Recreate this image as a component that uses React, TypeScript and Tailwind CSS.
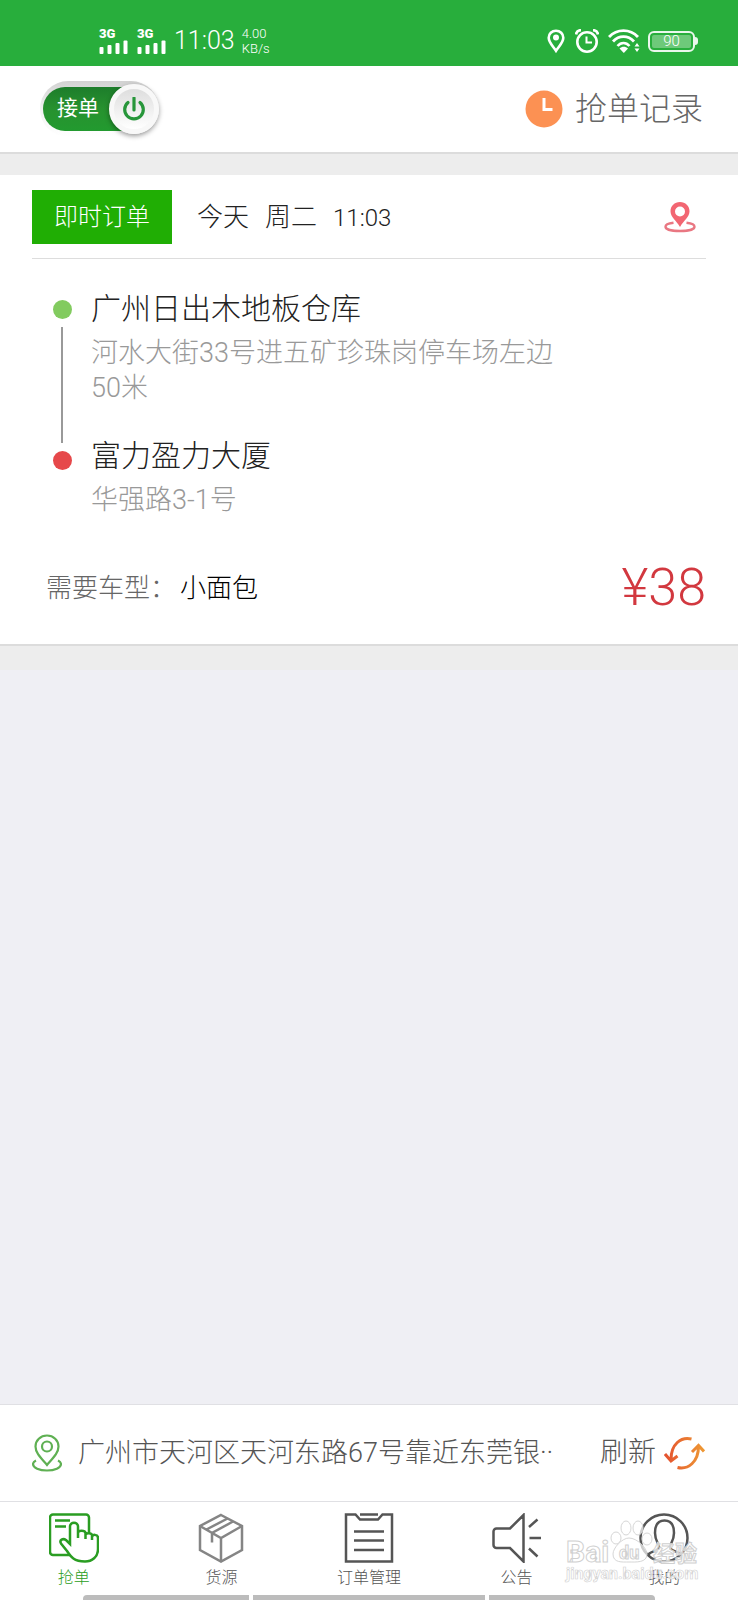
import { useState } from 'react';
import type { ReactNode } from 'react';

type Stop = {
    title: string;
    address: string;
};

type NavItem = {
    label: string;
    icon: ReactNode;
    active?: boolean;
};

const pickup: Stop = { title: '广州日出木地板仓库', address: '河水大街33号进五矿珍珠岗停车场左边50米' };
const dropoff: Stop = { title: '富力盈力大厦', address: '华强路3-1号' };

const Signal = () => (
    <div className="flex w-[29px] flex-col gap-px">
        <span className="text-[13px] leading-[10px] font-black">3G</span>
        <svg viewBox="0 0 29 14" className="h-[14px] w-[29px]" fill="currentColor" aria-hidden="true">
            <rect x="0.5" y="7" width="4" height="7" rx="1" />
            <rect x="8.5" y="5" width="4" height="9" rx="1" />
            <rect x="16.5" y="3" width="4" height="11" rx="1" />
            <rect x="24.5" y="0.5" width="4" height="13.5" rx="1" />
        </svg>
    </div>
);

const StatusBar = () => (
    <div className="flex items-start justify-between bg-[#28ae3c] pt-[26px] pr-[40px] pb-[10px] pl-[99px] text-white">
        <div className="flex h-[30px] items-center">
            <Signal />
            <div className="ml-[9px]">
                <Signal />
            </div>
            <span className="ml-[8px] text-[25px] leading-[30px] font-light">11:03</span>
            <span className="ml-[7px] flex flex-col text-[13px] leading-[15px] font-light">
                <span>4.00</span>
                <span>KB/s</span>
            </span>
        </div>
        <div className="flex h-[30px] items-center">
            <svg viewBox="0 0 18 24" className="mr-[10px] h-[24px] w-[18px]" fill="none" aria-hidden="true">
                <path
                    d="M9 1.7c-4.2 0-7.3 3-7.3 7.1 0 4.8 4.3 8.2 7.3 13 3-4.8 7.3-8.2 7.3-13 0-4.1-3.1-7.1-7.3-7.1z"
                    stroke="currentColor"
                    strokeWidth="2.6"
                />
                <circle cx="9" cy="8.5" r="3" fill="currentColor" />
            </svg>
            <svg viewBox="0 0 24 24" className="mr-[9px] h-[24px] w-[24px]" fill="none" stroke="currentColor" aria-hidden="true">
                <circle cx="12" cy="13" r="9.7" strokeWidth="2.6" />
                <path d="M11.5 7.500v6h5.500" strokeWidth="2" />
                <path d="M1 5.500C1.500 3 3.500 1.300 6 1.200M23 5.500C22.500 3 20.500 1.300 18 1.200" strokeWidth="2.800" />
            </svg>
            <svg viewBox="0 0 32 24" className="mr-[8px] h-[24px] w-[32px]" fill="none" stroke="currentColor" aria-hidden="true">
                <path d="M1 8C9-.5 22-.5 30 8" strokeWidth="2.8" />
                <path d="M5 12.500c6-6.500 15-6.500 21 0" strokeWidth="2.8" />
                <path d="M9.500 17c3.500-4 8.500-4 12 0" strokeWidth="2.6" />
                <path d="M11.500 19.500c2.500-2.500 6-2.500 8.500 0L15.800 24z" fill="currentColor" stroke="none" />
                <path d="M26.500 17.500h5L29 14zM26.500 19.500h5L29 23z" fill="currentColor" stroke="none" />
            </svg>
            <div className="flex items-center">
                <div className="h-[21px] w-[47px] rounded-[6px] border-2 border-white/90 p-[2px]">
                    <div className="h-full rounded-[2px] bg-[#6ec97a] text-center text-[15px] leading-[13px] font-light">90</div>
                </div>
                <div className="h-[8px] w-[3px] rounded-r-sm bg-white/90" />
            </div>
        </div>
    </div>
);

const OrderSwitch = () => {
    const [online, setOnline] = useState(true);

    return (
        <button
            type="button"
            role="switch"
            aria-checked={online}
            onClick={() => setOnline(!online)}
            className="flex h-[56px] w-[119px] items-center rounded-full bg-gradient-to-b from-[#d2d2d2] via-[#f2f2f2] to-white pl-[3px]"
        >
            <span className="flex h-[44px] flex-1 items-center rounded-l-full bg-gradient-to-b from-[#1d7d2b] via-[#27922f] to-[#229a2f] pl-[14px] text-[21px] text-white">
                接单
            </span>
            <span className="-ml-[14px] flex size-[50px] shrink-0 items-center justify-center rounded-full border-[5px] border-[#f8f8f8] bg-gradient-to-b from-[#dedede] to-white shadow-[0_2px_5px_rgba(0,0,0,0.4)]">
                <svg viewBox="0 0 24 24" className="size-[24px]" fill="none" stroke="#27963a" strokeWidth="3.2" aria-hidden="true">
                    <path d="M12 1v12" strokeLinecap="round" />
                    <path d="M6 5.500a9.300 9.300 0 1 0 12 0" strokeLinecap="round" />
                </svg>
            </span>
        </button>
    );
};

const Header = () => (
    <header className="flex items-center justify-between border-b-2 border-[#dcdcdc] bg-white pt-[15px] pr-[35px] pb-[15px] pl-[40px]">
        <OrderSwitch />
        <a href="#records" className="flex items-center gap-[12px] text-[32px] leading-[40px] font-light text-[#666]">
            <svg viewBox="0 0 38 38" className="size-[38px]" aria-hidden="true">
                <circle cx="19" cy="19" r="18.5" fill="#fc9153" />
                <path d="M19 8v11.500h8.500" fill="none" stroke="#fff" strokeWidth="3" />
            </svg>
            抢单记录
        </a>
    </header>
);

const StopText = ({ title, address }: Stop) => (
    <div className="flex flex-col gap-[5px]">
        <h2 className="text-[30px] leading-[44px] font-light text-[#222]">{title}</h2>
        <p className="w-[470px] max-w-full text-[27px] leading-[35px] font-light text-[#999]">{address}</p>
    </div>
);

const OrderCard = () => (
    <section className="border-b-2 border-[#dcdcdc] bg-white px-[32px] pt-[15px]">
        <div className="flex items-center border-b border-[#ddd] pb-[14px]">
            <span className="w-[140px] bg-[#20ae04] text-center text-[24px] leading-[54px] font-light text-white">即时订单</span>
            <p className="ml-[25px] flex items-baseline gap-[16px] text-[26px] font-light text-[#222]">
                <span>今天</span>
                <span>周二</span>
                <span className="text-[24px]">11:03</span>
            </p>
            <svg viewBox="0 0 32 32" className="mr-[10px] ml-auto size-[32px]" fill="none" role="img" aria-label="地图">
                <path
                    fillRule="evenodd"
                    d="M16 1C10.500 1 6.500 5 6.500 10.200 6.500 16 12 19 16 26c4-7 9.500-10 9.500-15.800C25.500 5 21.500 1 16 1zm0 4.500a5 5 0 1 1 0 10 5 5 0 0 1 0-10z"
                    fill="#f26672"
                />
                <path
                    d="M9.500 21.800C4 22.500 1.500 24 1.500 25.700c0 2.600 6.500 4.300 14.500 4.300s14.500-1.700 14.500-4.300c0-1.700-2.500-3.200-8-3.900"
                    stroke="#e97782"
                    strokeWidth="2.4"
                />
            </svg>
        </div>
        <div className="flex gap-[19px] pt-[28px] pl-[20px]">
            <div className="flex w-[20px] flex-col items-center gap-[8px] pt-[13px] pb-[48px]">
                <span className="size-[19px] rounded-full bg-[#82cb5f]" />
                <span className="w-[2px] flex-1 bg-[#999]" />
                <span className="size-[19px] rounded-full bg-[#e6484a]" />
            </div>
            <div className="flex flex-1 flex-col gap-[28px]">
                <StopText {...pickup} />
                <StopText {...dropoff} />
            </div>
        </div>
        <div className="flex items-center justify-between pt-[40px] pb-[26px] pl-[14px] font-light">
            <p className="flex gap-[4px] text-[26px] text-[#666]">
                需要车型：<span className="text-black">小面包</span>
            </p>
            <span className="text-[52px] leading-[60px] text-[#d2383f]">¥38</span>
        </div>
    </section>
);

const LocationBar = () => (
    <div className="flex items-center border-y border-[#e0e0e4] bg-white py-[27px] pr-[33px] pl-[32px] font-light text-[#555]">
        <svg viewBox="0 0 30 38" className="h-[38px] w-[30px] shrink-0" fill="none" stroke="#5fb053" strokeWidth="2.2" aria-hidden="true">
            <path d="M15 1.500C8.500 1.500 3.500 6.300 3.500 12.500 3.500 19 9 24 15 31c6-7 11.500-12 11.500-18.500C26.500 6.300 21.500 1.500 15 1.500z" />
            <circle cx="15" cy="12.5" r="5" />
            <path d="M4 26.500C2 27.500 1 28.700 1 30c0 3.800 6.300 6.500 14 6.500S29 33.800 29 30c0-1.300-1-2.500-3-3.500" />
        </svg>
        <p className="ml-[16px] flex-1 text-[27px] leading-[42px] whitespace-nowrap">广州市天河区天河东路67号靠近东莞银··</p>
        <button type="button" className="flex items-center gap-[8px] text-[28px] leading-[42px]">
            刷新
            <svg viewBox="0 0 41 34" className="h-[34px] w-[41px]" fill="none" strokeWidth="3" aria-hidden="true">
                <defs>
                    <linearGradient id="refresh" gradientUnits="userSpaceOnUse" x1="0" y1="0" x2="41" y2="0">
                        <stop offset="0" stopColor="#e4502f" />
                        <stop offset="1" stopColor="#ee9a34" />
                    </linearGradient>
                </defs>
                <g stroke="url(#refresh)">
                    <path d="M27.500 3C17 .5 7 8 7 23.500M1 18l6 7 6.500-5" />
                    <path d="M13.500 31.500C24 34 34.500 26 34.500 10.500M28 16l6.500-6.500L40 15.500" />
                </g>
            </svg>
        </button>
    </div>
);

const navItems: NavItem[] = [
    {
        label: '抢单',
        active: true,
        icon: (
            <>
                <path d="M40 20V4.500a3 3 0 0 0-3-3H4a3 3 0 0 0-3 3V39a3 3 0 0 0 3 3h17" />
                <path d="M6 7.500h15M6 13.500h11" />
                <path d="M21 31V13.500c0-5 8-5 8 0V25v-5c0-3 7-3 7.500 0v6-4c0-2.500 6-2.500 6.500 0v5-3c0-3 6-3 6 1v11c0 8-6 12.500-13 12.500-11 0-14-4.500-18-10.500l-6-7.500c-2-3.500 2-5.500 5-3.500z" />
            </>
        ),
    },
    {
        label: '货源',
        icon: (
            <g stroke="#858585">
                <path d="M25 2L46 13v24L25 48.500 4 37V13z" />
                <path d="M4 13l21 12 21-12M25 25v23.500M10.500 16.500l21-11M16 29.500V20l21-11.500" />
            </g>
        ),
    },
    {
        label: '订单管理',
        icon: (
            <>
                <path d="M2 1.500h9.500l4.500 5h18l4.500-5H48V48.500H2z" />
                <path d="M16 1.500h18M10 18.500h30M10 27.500h30M10 37h30" />
            </>
        ),
    },
    {
        label: '公告',
        icon: (
            <>
                <path d="M1.500 18.500a3 3 0 0 1 3-3H18L31.500 2v46.500L18 35H4.500a3 3 0 0 1-3-3z" />
                <path d="M37 14l8.500-7.500M37.500 25H49M37 35.500l8.500 8" />
            </>
        ),
    },
    {
        label: '我的',
        icon: (
            <>
                <circle cx="25" cy="25" r="23.5" />
                <path d="M9 42c3-5 11-3 11-8 0-3-4-6-4-14 0-8 3.500-12.500 9.500-12.500S35 12 35 20c0 8-4 11-4 14 0 5 8 3 11 8" />
            </>
        ),
    },
];

const Watermark = () => (
    <svg viewBox="0 0 140 75" className="pointer-events-none absolute right-[36px] bottom-[13px] h-[75px] w-[140px]" aria-hidden="true">
        <g fill="#fff" fillOpacity="0.7" stroke="#d6d6d6" strokeWidth="1">
            <ellipse cx="54" cy="26" rx="5" ry="6" />
            <ellipse cx="64" cy="16" rx="5" ry="7" />
            <ellipse cx="76" cy="16" rx="5" ry="7" />
            <ellipse cx="85" cy="27" rx="5" ry="6" />
            <path d="M67 26c-7 0-16 10-16 16 0 9 9 8 16 8s18 1 18-8c0-6-10-16-18-16z" />
        </g>
        <g fill="#fff" fillOpacity="0.75" stroke="#d0d0d0" strokeWidth="1" fontWeight="700">
            <text x="4" y="50" fontSize="30">
                Bai
            </text>
            <text x="57" y="47" fontSize="18">
                du
            </text>
            <text x="91" y="49" fontSize="22">
                经验
            </text>
            <text x="4" y="67" fontSize="16" strokeWidth="0.6">
                jingyan.baidu.com
            </text>
        </g>
    </svg>
);

const TabBar = () => (
    <nav className="relative bg-white pt-[11px]">
        <ul className="grid grid-cols-5">
            {navItems.map((item) => (
                <li key={item.label}>
                    <a
                        href={`#${item.label}`}
                        className={`flex flex-col items-center gap-[4px] text-[16px] leading-[22px] font-light ${item.active ? 'text-[#2a9d22]' : 'text-[#555]'}`}
                    >
                        <svg viewBox="0 0 50 50" className="size-[50px]" fill="none" stroke="currentColor" strokeWidth="2.5" aria-hidden="true">
                            {item.icon}
                        </svg>
                        {item.label}
                    </a>
                </li>
            ))}
        </ul>
        <div className="mx-[83px] mt-[6px] flex gap-[4px]">
            <span className="h-[5px] w-[29%] rounded-tl bg-[#bcbcbc]" />
            <span className="h-[5px] flex-1 bg-[#bcbcbc]" />
            <span className="h-[5px] w-[29%] rounded-tr bg-[#bcbcbc]" />
        </div>
        <Watermark />
    </nav>
);

const App = () => {
    return (
        <div className="flex min-h-screen flex-col bg-[#efeff4] font-['Roboto','Noto_Sans_CJK_SC',sans-serif]">
            <StatusBar />
            <Header />
            <main className="flex-1">
                <div className="h-[21px] bg-[#ededed]" />
                <OrderCard />
                <div className="h-[24px] bg-[#ededed]" />
            </main>
            <LocationBar />
            <TabBar />
        </div>
    );
};

export default App;
